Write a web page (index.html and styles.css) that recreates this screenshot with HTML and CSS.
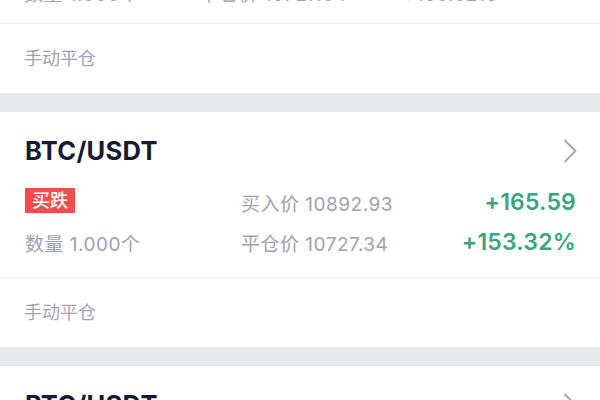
FILE: index.html
```html
<!DOCTYPE html>
<html lang="zh-CN">
<head>
<meta charset="utf-8">
<title>持仓</title>
<link rel="stylesheet" href="styles.css">
</head>
<body>
<div class="list">
  <section class="card card-partial">
    <div class="partial-row">
      <span class="muted">数量 1.000个</span>
      <span class="muted p2">平仓价 10727.34</span>
      <span class="muted p3">+153.32%</span>
    </div>
    <div class="footer">手动平仓</div>
  </section>
  <div class="band"></div>
  <section class="card">
    <div class="head">
      <span class="title">BTC/USDT</span>
      <svg class="chev" width="14" height="24" viewBox="0 0 14 24"><path d="M2 1.5 L12.5 12 L2 22.5" fill="none" stroke="#a4a4b0" stroke-width="1.8" stroke-linecap="round" stroke-linejoin="round"/></svg>
    </div>
    <div class="body">
      <div class="cell"><span class="badge">买跌</span></div>
      <div class="cell muted">买入价 10892.93</div>
      <div class="cell green big">+165.59</div>
      <div class="cell muted">数量 1.000个</div>
      <div class="cell muted">平仓价 10727.34</div>
      <div class="cell green big">+153.32%</div>
    </div>
    <div class="footer">手动平仓</div>
  </section>
  <div class="band"></div>
  <section class="card">
    <div class="head">
      <span class="title">BTC/USDT</span>
      <svg class="chev" width="14" height="24" viewBox="0 0 14 24"><path d="M2 1.5 L12.5 12 L2 22.5" fill="none" stroke="#a4a4b0" stroke-width="1.8" stroke-linecap="round" stroke-linejoin="round"/></svg>
    </div>
  </section>
</div>
</body>
</html>
```
FILE: styles.css
```css
html, body {
  margin: 0;
  padding: 0;
  background: #ffffff;
  width: 600px;
  height: 400px;
  overflow: hidden;
}
body {
  font-family: "Inter", "Noto Sans CJK SC", sans-serif;
  color: #a2a3b1;
}
.list {
  display: flex;
  flex-direction: column;
}
.card {
  background: #ffffff;
}
.card-partial {
  margin-top: -16px;
}
.partial-row {
  display: flex;
  height: 22px;
  line-height: 22px;
  font-size: 19px;
  letter-spacing: 0.5px;
  padding: 0 0 17px 24px;
  border-bottom: 1px solid #efeff1;
}
.partial-row .p2 { margin-left: 60px; }
.partial-row .p3 { margin-left: 56px; }
.band {
  height: 19px;
  background: #e8e9eb;
}
.head {
  display: flex;
  align-items: center;
  justify-content: space-between;
  padding: 23px 23px 16px 25px;
  height: 31px;
}
.title {
  font-size: 25.5px;
  font-weight: 700;
  color: #151b33;
  line-height: 31px;
  letter-spacing: 0.3px;
}
.chev {
  display: block;
}
.body {
  display: grid;
  grid-template-columns: 216px 1fr auto;
  grid-auto-rows: 40px;
  padding: 0 24px 15px 25px;
  border-bottom: 1px solid #efeff1;
}
.cell {
  display: flex;
  align-items: center;
  font-size: 19px;
  letter-spacing: 0.5px;
  white-space: nowrap;
}
.muted {
  color: #a0a1b0;
}
.green {
  color: #38a67c;
  justify-content: flex-end;
}
.big {
  font-size: 23px;
  font-weight: 600;
  letter-spacing: 0.2px;
}
.badge {
  display: inline-block;
  background: #ee4e4e;
  color: #ffffff;
  font-size: 18px;
  font-weight: 500;
  letter-spacing: 0;
  line-height: 25px;
  height: 25px;
  padding: 0 7px;
  margin-top: -3px;
}
.footer {
  height: 69px;
  line-height: 69px;
  padding-left: 24px;
  font-size: 18px;
  color: #a2a3b1;
}
```
